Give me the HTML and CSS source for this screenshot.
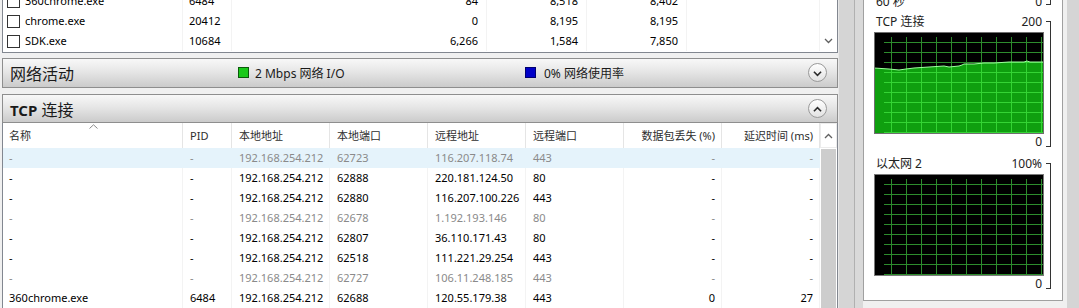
FILE: index.html
```html
<!DOCTYPE html>
<html lang="zh-CN">

<head>
    <meta charset="UTF-8">
    <title>资源监视器 - 网络</title>
    <link rel="stylesheet" href="styles.css">
</head>

<body>
    <div class="screen">
        <div class="left">
            <!-- 进程列表 (scrolled) -->
            <div class="proc-table">
                <div class="proc-rows">
                    <div class="proc-row">
                        <span class="name"><i class="check"></i>360chrome.exe</span>
                        <span>6484</span>
                        <span class="num">84</span>
                        <span class="num">8,518</span>
                        <span class="num">8,402</span>
                        <span></span>
                    </div>
                    <div class="proc-row">
                        <span class="name"><i class="check"></i>chrome.exe</span>
                        <span>20412</span>
                        <span class="num">0</span>
                        <span class="num">8,195</span>
                        <span class="num">8,195</span>
                        <span></span>
                    </div>
                    <div class="proc-row">
                        <span class="name"><i class="check"></i>SDK.exe</span>
                        <span>10684</span>
                        <span class="num">6,266</span>
                        <span class="num">1,584</span>
                        <span class="num">7,850</span>
                        <span></span>
                    </div>
                </div>
                <div class="proc-scroll">
                    <svg width="9" height="6" viewBox="0 0 9 6"><path d="M1 1 L4.5 4.5 L8 1" fill="none" stroke="#606060" stroke-width="1.3"/></svg>
                </div>
            </div>

            <!-- 网络活动 -->
            <div class="section-bar">
                <div class="bar-title">网络活动</div>
                <div class="legend legend-io"><i class="swatch green"></i>2 Mbps 网络 I/O</div>
                <div class="legend legend-use"><i class="swatch blue"></i>0% 网络使用率</div>
                <button class="round-btn">
                    <svg width="19" height="19" viewBox="0 0 19 19"><path d="M5.5 7.5 L9.5 11.5 L13.5 7.5" fill="none" stroke="#2b2b2b" stroke-width="1.8"/></svg>
                </button>
            </div>

            <!-- TCP 连接 -->
            <div class="section-bar tcp-bar">
                <div class="bar-title"><b>TCP</b> 连接</div>
                <button class="round-btn">
                    <svg width="19" height="19" viewBox="0 0 19 19"><path d="M5.5 11.5 L9.5 7.5 L13.5 11.5" fill="none" stroke="#2b2b2b" stroke-width="1.8"/></svg>
                </button>
            </div>

            <div class="tcp-table">
                <div class="tcp-main">
                    <div class="tcp-head">
                        <span class="sorted">名称
                            <svg class="sort-arrow" width="9" height="5" viewBox="0 0 9 5"><path d="M0.5 4.5 L4.5 0.8 L8.5 4.5" fill="none" stroke="#8a8a8a" stroke-width="1"/></svg>
                        </span>
                        <span>PID</span>
                        <span>本地地址</span>
                        <span>本地端口</span>
                        <span>远程地址</span>
                        <span>远程端口</span>
                        <span class="num">数据包丢失 (%)</span>
                        <span class="num">延迟时间 (ms)</span>
                    </div>
                    <div class="tcp-row dim selected">
                        <span>-</span><span>-</span><span>192.168.254.212</span><span>62723</span>
                        <span>116.207.118.74</span><span>443</span><span class="num">-</span><span class="num">-</span>
                    </div>
                    <div class="tcp-row">
                        <span>-</span><span>-</span><span>192.168.254.212</span><span>62888</span>
                        <span>220.181.124.50</span><span>80</span><span class="num">-</span><span class="num">-</span>
                    </div>
                    <div class="tcp-row">
                        <span>-</span><span>-</span><span>192.168.254.212</span><span>62880</span>
                        <span>116.207.100.226</span><span>443</span><span class="num">-</span><span class="num">-</span>
                    </div>
                    <div class="tcp-row dim">
                        <span>-</span><span>-</span><span>192.168.254.212</span><span>62678</span>
                        <span>1.192.193.146</span><span>80</span><span class="num">-</span><span class="num">-</span>
                    </div>
                    <div class="tcp-row">
                        <span>-</span><span>-</span><span>192.168.254.212</span><span>62807</span>
                        <span>36.110.171.43</span><span>80</span><span class="num">-</span><span class="num">-</span>
                    </div>
                    <div class="tcp-row">
                        <span>-</span><span>-</span><span>192.168.254.212</span><span>62518</span>
                        <span>111.221.29.254</span><span>443</span><span class="num">-</span><span class="num">-</span>
                    </div>
                    <div class="tcp-row dim">
                        <span>-</span><span>-</span><span>192.168.254.212</span><span>62727</span>
                        <span>106.11.248.185</span><span>443</span><span class="num">-</span><span class="num">-</span>
                    </div>
                    <div class="tcp-row">
                        <span>360chrome.exe</span><span>6484</span><span>192.168.254.212</span><span>62688</span>
                        <span>120.55.179.38</span><span>443</span><span class="num">0</span><span class="num">27</span>
                    </div>
                </div>
                <div class="tcp-scroll">
                    <div class="scroll-btn">
                        <svg width="9" height="6" viewBox="0 0 9 6"><path d="M1 5 L4.5 1.5 L8 5" fill="none" stroke="#606060" stroke-width="1.3"/></svg>
                    </div>
                    <div class="scroll-thumb"></div>
                </div>
            </div>
        </div>

        <div class="pane-scroll"></div>
        <div class="splitter"></div>

        <div class="right">
            <div class="panel">
                <!-- tail of the previous chart -->
                <div class="chart-block chart-tail">
                    <div class="chart-col">
                        <div class="chart-label"><span>60 秒</span><span>0</span></div>
                    </div>
                    <div class="bracket tail"></div>
                </div>

                <div class="chart-block">
                    <div class="chart-col">
                        <div class="chart-label"><span>TCP 连接</span><span>200</span></div>
                        <svg class="graph" width="170" height="102" viewBox="0 0 170 102">
                            <defs>
                                <pattern id="gridTcp" x="2" y="0" width="15" height="10" patternUnits="userSpaceOnUse">
                                    <rect width="1" height="10" fill="#52ff52"/>
                                    <rect width="15" height="1" fill="#52ff52"/>
                                </pattern>
                            </defs>
                            <rect width="170" height="102" fill="#000"/>
                            <polygon points="0,36 15,37 25,38 32,37 40,36 55,35 70,34 75,35 85,34 88,33 90,32 100,32 110,31 120,31 135,30 150,30 153,29 156,30 170,30 170,102 0,102" fill="#0f9f0f"/>
                            <rect x="10" y="5" width="160" height="97" fill="url(#gridTcp)" opacity="0.55"/>
                            <polyline points="0,36 15,37 25,38 32,37 40,36 55,35 70,34 75,35 85,34 88,33 90,32 100,32 110,31 120,31 135,30 150,30 153,29 156,30 170,30" fill="none" stroke="#9cff9c" stroke-width="1"/>
                            <rect x="0.5" y="0.5" width="169" height="101" fill="none" stroke="#6e6e6e" stroke-width="1"/>
                        </svg>
                        <div class="chart-label"><span></span><span>0</span></div>
                    </div>
                    <div class="bracket"></div>
                </div>

                <div class="chart-block">
                    <div class="chart-col">
                        <div class="chart-label"><span>以太网 2</span><span>100%</span></div>
                        <svg class="graph" width="170" height="102" viewBox="0 0 170 102">
                            <defs>
                                <pattern id="gridEth" x="2" y="0" width="15" height="10" patternUnits="userSpaceOnUse">
                                    <rect width="1" height="10" fill="#52ff52"/>
                                    <rect width="15" height="1" fill="#52ff52"/>
                                </pattern>
                            </defs>
                            <rect width="170" height="102" fill="#000"/>
                            <rect x="10" y="5" width="160" height="97" fill="url(#gridEth)" opacity="0.55"/>
                            <rect x="0.5" y="0.5" width="169" height="101" fill="none" stroke="#7a7a7a" stroke-width="1"/>
                        </svg>
                        <div class="chart-label"><span></span><span>0</span></div>
                    </div>
                    <div class="bracket"></div>
                </div>
            </div>
            <div class="right-gap"></div>
            <div class="right-scroll"></div>
        </div>
    </div>
</body>

</html>
```

FILE: styles.css
```css
/* Basic reset */
* {
    margin: 0;
    padding: 0;
    box-sizing: border-box;
}

body {
    width: 1079px;
    height: 308px;
    overflow: hidden;
    background-color: #f0f0f0;
    font-family: "Noto Sans", "Noto Sans CJK SC", sans-serif;
    font-size: 11px;
    color: #000;
}

.screen {
    display: flex;
    height: 308px;
}

/* Left pane */
.left {
    width: 838px;
    flex-shrink: 0;
    padding-left: 2px;
    display: flex;
    flex-direction: column;
}

/* Process table at the top */
.proc-table {
    display: flex;
    height: 53px;
    background: #fff;
    border: 1px solid #828790;
    border-top: none;
    overflow: hidden;
}

.proc-rows {
    width: 817px;
    margin-top: -9px;
}

.proc-row {
    display: grid;
    grid-template-columns: 180px 49px 255px 100px 100px 133px;
    height: 20px;
}

.proc-row span {
    line-height: 20px;
    padding: 0 8px 0 6px;
    border-right: 1px solid #f3f3f3;
    white-space: nowrap;
}

.proc-row .name {
    display: flex;
    align-items: center;
    padding-left: 4px;
}

.check {
    width: 13px;
    height: 13px;
    border: 1px solid #333;
    background: #fff;
    margin-right: 5px;
}

.num {
    text-align: right;
}

.proc-scroll {
    width: 17px;
    display: flex;
    align-items: flex-end;
    justify-content: center;
    padding-bottom: 8px;
}

/* Collapsible section bars */
.section-bar {
    height: 31px;
    margin-top: 5px;
    display: flex;
    align-items: center;
    padding: 0 10px 0 7px;
    border: 1px solid #8e8e8e;
    background: linear-gradient(#f8f8f8, #e6e6e6 45%, #cbcbcb);
}

.tcp-bar {
    height: 29px;
    margin-top: 6px;
}

.bar-title {
    width: 228px;
    font-size: 16px;
    color: #1a1a1a;
    white-space: nowrap;
}

.bar-title b {
    font-weight: 700;
    font-size: 15px;
}

.tcp-bar .bar-title {
    flex: 1;
}

.legend {
    display: flex;
    align-items: center;
    font-size: 12px;
    color: #1a1a1a;
}

.legend-io {
    width: 287px;
}

.legend-use {
    flex: 1;
}

.swatch {
    width: 11px;
    height: 11px;
    margin-right: 6px;
}

.swatch.green {
    background: #19c919;
    border: 1px solid #0a5a0a;
}

.swatch.blue {
    background: #0000c8;
    border: 1px solid #000070;
    margin-right: 8px;
}

.round-btn {
    width: 19px;
    height: 19px;
    border: 1px solid #9a9a9a;
    border-radius: 50%;
    background: linear-gradient(#ffffff, #e2e2e2);
    display: flex;
}

/* TCP table */
.tcp-table {
    flex: 1;
    display: flex;
    background: #fff;
    border-left: 1px solid #828790;
    border-right: 1px solid #828790;
}

.tcp-main {
    width: 817px;
}

.tcp-head,
.tcp-row {
    display: grid;
    grid-template-columns: 180px 49px repeat(6, 98px);
}

.tcp-head {
    height: 25px;
}

.tcp-head span {
    position: relative;
    line-height: 25px;
    padding: 0 6px 0 7px;
    color: #2e2e2e;
    border-right: 1px solid #e5e5e5;
    white-space: nowrap;
}

.tcp-head .sorted {
    padding-left: 6px;
}

.sort-arrow {
    position: absolute;
    left: 86px;
    top: 1px;
}

.tcp-row {
    height: 20px;
}

.tcp-row span {
    line-height: 20px;
    padding: 0 6px 0 7px;
    border-right: 1px solid #f3f3f3;
    white-space: nowrap;
}

.tcp-row span:first-child {
    padding-left: 6px;
}

.tcp-row.dim {
    color: #8a8a8a;
}

.tcp-row.selected {
    background: #e5f3fb;
}

.tcp-row.selected span {
    border-right-color: #e5f3fb;
}

.tcp-scroll {
    width: 17px;
    display: flex;
    flex-direction: column;
}

.scroll-btn {
    height: 25px;
    display: flex;
    align-items: center;
    justify-content: center;
    border: 1px solid #ececec;
}

.scroll-thumb {
    flex: 1;
    margin: 1px 1px 0 1px;
    background: #cdcdcd;
}

/* Pane scrollbar and splitter */
.pane-scroll {
    width: 16px;
    flex-shrink: 0;
    background: #d5d5d5;
    border-left: 1px solid #e8e8e8;
}

.splitter {
    width: 9px;
    flex-shrink: 0;
    background: #d9d9d9;
    border-left: 1px solid #b0b0b0;
}

/* Right pane with charts */
.right {
    flex: 1;
    display: flex;
    background: #f0f0f0;
}

.panel {
    width: 200px;
    height: 301px;
    background: #fff;
    border: 1px solid #a0a0a0;
    border-top: none;
    padding-left: 10px;
    overflow: hidden;
}

.right-gap {
    width: 4px;
}

.right-scroll {
    flex: 1;
    background: #d5d5d5;
}

.chart-block {
    display: flex;
    margin-bottom: 6px;
}

.chart-tail {
    margin-top: -6px;
    margin-bottom: 4px;
}

.chart-col {
    width: 170px;
}

.chart-label {
    display: flex;
    justify-content: space-between;
    height: 16px;
    line-height: 16px;
    padding: 0 2px;
    font-size: 12px;
    color: #222;
}

.graph {
    display: block;
    margin-top: 2px;
}

.bracket {
    width: 5px;
    margin: 7px 0 3px 2px;
    border: 1px solid #333;
    border-left: none;
}

.bracket.tail {
    border-top: none;
    margin: 0 0 5px 2px;
}
```
